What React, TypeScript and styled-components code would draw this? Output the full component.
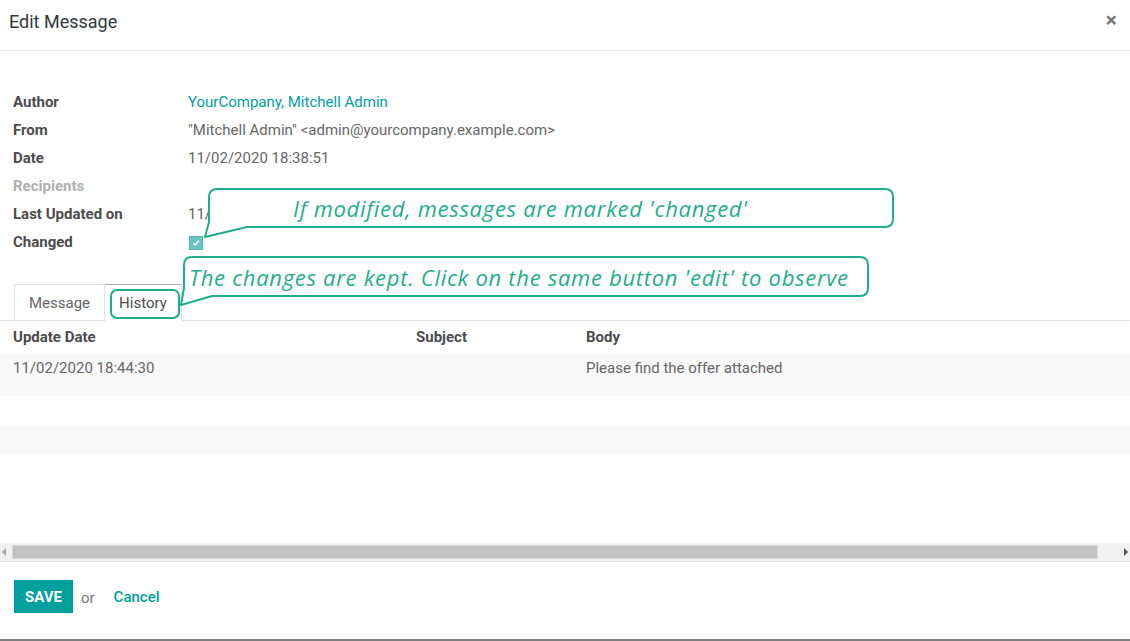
import React from "react";
import styled, { createGlobalStyle } from "styled-components";

const GlobalStyle = createGlobalStyle`
	html, body {
		margin: 0;
		padding: 0;
		background: #fff;
	}
	body {
		font-family: Roboto, "Liberation Sans", sans-serif;
		font-size: 15px;
		color: #666;
	}
`;

const TEAL = "#00a09d";
const NOTE = "#1fae8c";

const Modal = styled.main`
	position: relative;
	height: 641px;
	display: flex;
	flex-direction: column;
	overflow: hidden;
	box-sizing: border-box;
	border-bottom: 2px solid #7d7d7d;
`;

const Header = styled.header`
	height: 50px;
	flex: none;
	display: flex;
	align-items: center;
	justify-content: space-between;
	padding: 0 13px 0 9px;
	border-bottom: 1px solid #e3e3e3;
	box-sizing: content-box;
`;

const Title = styled.h4`
	margin: 0 0 8px;
	font-size: 18px;
	font-weight: 400;
	color: #33383d;
`;

const Close = styled.span`
	font-size: 21px;
	font-weight: 700;
	color: #777;
	line-height: 1;
	margin-bottom: 10px;
`;

const Sheet = styled.section`
	flex: 1;
	display: flex;
	flex-direction: column;
	padding-top: 37px;
`;

const Fields = styled.div`
	display: grid;
	grid-template-columns: 175px 1fr;
	grid-auto-rows: 28px;
	padding-left: 13px;
`;

const Label = styled.div<{ $muted?: boolean }>`
	display: flex;
	align-items: center;
	font-weight: 700;
	color: ${(p) => (p.$muted ? "#b0b0b0" : "#4c4c4c")};
`;

const Value = styled.div<{ $link?: boolean }>`
	display: flex;
	align-items: center;
	color: ${(p) => (p.$link ? TEAL : "#666")};
`;

const Checkbox = styled.span`
	width: 12px;
	height: 12px;
	margin-left: 1px;
	margin-top: 1px;
	background: #6cc4c2;
	border: 1px solid #55b7b5;
	display: flex;
	align-items: center;
	justify-content: center;
`;

const Tabs = styled.nav`
	margin-top: 28px;
	display: flex;
	padding-left: 14px;
	border-bottom: 1px solid #dee2e6;
	height: 36px;
`;

const Tab = styled.div<{ $active?: boolean }>`
	display: flex;
	align-items: center;
	padding: 0 14px;
	margin-bottom: -1px;
	border: 1px solid #dee2e6;
	border-left-width: ${(p) => (p.$active ? 0 : 1)}px;
	border-top-color: ${(p) => (p.$active ? "#b9a7c0" : "#dee2e6")};
	border-bottom-color: ${(p) => (p.$active ? "#fff" : "#dee2e6")};
	background: #fff;
	color: ${(p) => (p.$active ? "#4c4c4c" : "#666")};
`;

const Table = styled.div`
	display: flex;
	flex-direction: column;
	flex: 1;
`;

const Row = styled.div<{ $head?: boolean; $h: number; $striped?: boolean }>`
	display: grid;
	grid-template-columns: 403px 170px 1fr;
	height: ${(p) => p.$h}px;
	padding-left: 13px;
	align-items: ${(p) => (p.$head ? "center" : "start")};
	padding-top: ${(p) => (p.$head ? 0 : 6)}px;
	box-sizing: border-box;
	background: ${(p) => (p.$striped ? "#f9f9f9" : "#fff")};
	font-weight: ${(p) => (p.$head ? 700 : 400)};
	color: ${(p) => (p.$head ? "#4c4c4c" : "#666")};
	box-shadow: ${(p) => (p.$head ? "0 1px 2px rgba(0,0,0,0.12)" : "none")};
	position: relative;
`;

const Spacer = styled.div`
	flex: 1;
`;

const Scrollbar = styled.div`
	height: 18px;
	background: #f1f1f1;
	display: flex;
	align-items: center;
	justify-content: space-between;
	padding: 0 2px;
`;

const Thumb = styled.div`
	height: 12px;
	flex: 1;
	margin: 0 26px 0 6px;
	background: #c1c1c1;
	border: 1px solid #d6d6d6;
`;

const Arrow = styled.span<{ $dir: "left" | "right" }>`
	width: 0;
	height: 0;
	border-top: 4px solid transparent;
	border-bottom: 4px solid transparent;
	${(p) =>
		p.$dir === "left"
			? "border-right: 4px solid #a3a3a3;"
			: "border-left: 4px solid #505050;"}
`;

const Footer = styled.footer`
	flex: none;
	height: 78px;
	border-top: 1px solid #e3e3e3;
	display: flex;
	align-items: flex-start;
	padding: 18px 14px 0;
	box-sizing: border-box;
	gap: 8px;
`;

const SaveButton = styled.button`
	height: 33px;
	padding: 0 11px;
	border: none;
	background: ${TEAL};
	color: #fff;
	font-family: Roboto, "Liberation Sans", sans-serif;
	font-size: 15px;
	font-weight: 700;
	text-transform: uppercase;
`;

const Or = styled.span`
	line-height: 37px;
	color: #777;
`;

const CancelLink = styled.a`
	line-height: 35px;
	margin-left: 11px;
	color: ${TEAL};
	font-weight: 500;
	text-decoration: none;
`;

/* annotations drawn over the dialog */
const Callout = styled.div<{ $x: number; $y: number; $w: number; $h: number }>`
	position: absolute;
	left: ${(p) => p.$x}px;
	top: ${(p) => p.$y}px;
	width: ${(p) => p.$w}px;
	height: ${(p) => p.$h}px;
`;

const CalloutShape = styled.svg`
	position: absolute;
	left: 0;
	top: 0;
	overflow: visible;
`;

const CalloutText = styled.span<{ $pad: number }>`
	position: relative;
	display: flex;
	align-items: center;
	height: 100%;
	padding-left: ${(p) => p.$pad}px;
	font-family: "Open Sans", Lato, sans-serif;
	font-style: italic;
	font-size: 22px;
	letter-spacing: 0.7px;
	color: ${NOTE};
	white-space: nowrap;
`;

const Highlight = styled.div`
	position: absolute;
	left: 110px;
	top: 289px;
	width: 66px;
	height: 26px;
	border: 2px solid ${NOTE};
	border-radius: 7px;
`;

interface NoteProps {
	x: number;
	y: number;
	w: number;
	h: number;
	tail: [number, number, number, number];
	pad: number;
	children: React.ReactNode;
}

const Note = ({ x, y, w, h, tail, pad, children }: NoteProps) => {
	const r = 8;
	const [leftY, tipX, tipY, backX] = tail;
	const d = `M ${r} 0 H ${w - r} Q ${w} 0 ${w} ${r} V ${h - r} Q ${w} ${h} ${w - r} ${h} H ${backX} L ${tipX} ${tipY} L 0 ${leftY} V ${r} Q 0 0 ${r} 0 Z`;
	return (
		<Callout $x={x} $y={y} $w={w} $h={h}>
			<CalloutShape width={w} height={h}>
				<path d={d} fill="#fff" stroke={NOTE} strokeWidth={2} strokeLinejoin="round" />
			</CalloutShape>
			<CalloutText $pad={pad}>{children}</CalloutText>
		</Callout>
	);
};

const App = () => {
	return (
		<>
			<GlobalStyle />
			<Modal>
				<Header>
					<Title>Edit Message</Title>
					<Close>×</Close>
				</Header>
				<Sheet>
					<Fields>
						<Label>Author</Label>
						<Value $link>YourCompany, Mitchell Admin</Value>
						<Label>From</Label>
						<Value>"Mitchell Admin" &lt;admin@yourcompany.example.com&gt;</Value>
						<Label>Date</Label>
						<Value>11/02/2020 18:38:51</Value>
						<Label $muted>Recipients</Label>
						<Value />
						<Label>Last Updated on</Label>
						<Value>11/02/2020 18:44:30</Value>
						<Label>Changed</Label>
						<Value>
							<Checkbox>
								<svg width="8" height="8" viewBox="0 0 8 8">
									<path d="M1.3 4.2 L3.2 6 L6.8 1.8" fill="none" stroke="#fff" strokeWidth="1.4" />
								</svg>
							</Checkbox>
						</Value>
					</Fields>
					<Tabs>
						<Tab>Message</Tab>
						<Tab $active>History</Tab>
					</Tabs>
					<Table>
						<Row $head $h={32}>
							<span>Update Date</span>
							<span>Subject</span>
							<span>Body</span>
						</Row>
						<Row $h={43} $striped>
							<span>11/02/2020 18:44:30</span>
							<span />
							<span>Please find the offer attached</span>
						</Row>
						<Row $h={30} />
						<Row $h={28} $striped />
						<Spacer />
					</Table>
					<Scrollbar>
						<Arrow $dir="left" />
						<Thumb />
						<Arrow $dir="right" />
					</Scrollbar>
				</Sheet>
				<Footer>
					<SaveButton>Save</SaveButton>
					<Or>or</Or>
					<CancelLink href="#">Cancel</CancelLink>
				</Footer>

				<Highlight />
				<Note x={209} y={189} w={684} h={38} tail={[33, -4, 48, 38]} pad={84}>
					If modified, messages are marked 'changed'
				</Note>
				<Note x={184} y={257} w={684} h={39} tail={[31, -3, 48, 28]} pad={5}>
					The changes are kept. Click on the same button 'edit' to observe
				</Note>
			</Modal>
		</>
	);
};

export default App;
